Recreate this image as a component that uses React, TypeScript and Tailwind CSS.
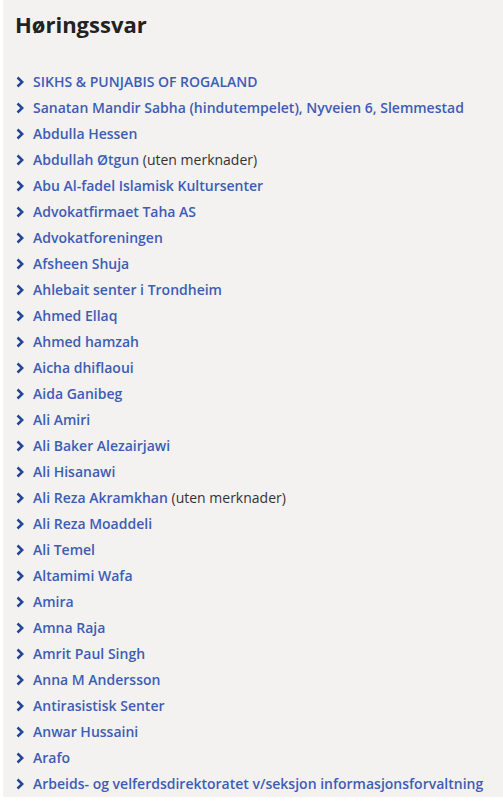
const items: { name: string; note?: string }[] = [
  { name: "SIKHS & PUNJABIS OF ROGALAND" },
  { name: "Sanatan Mandir Sabha (hindutempelet), Nyveien 6, Slemmestad" },
  { name: "Abdulla Hessen" },
  { name: "Abdullah Øtgun", note: "(uten merknader)" },
  { name: "Abu Al-fadel Islamisk Kultursenter" },
  { name: "Advokatfirmaet Taha AS" },
  { name: "Advokatforeningen" },
  { name: "Afsheen Shuja" },
  { name: "Ahlebait senter i Trondheim" },
  { name: "Ahmed Ellaq" },
  { name: "Ahmed hamzah" },
  { name: "Aicha dhiflaoui" },
  { name: "Aida Ganibeg" },
  { name: "Ali Amiri" },
  { name: "Ali Baker Alezairjawi" },
  { name: "Ali Hisanawi" },
  { name: "Ali Reza Akramkhan", note: "(uten merknader)" },
  { name: "Ali Reza Moaddeli" },
  { name: "Ali Temel" },
  { name: "Altamimi Wafa" },
  { name: "Amira" },
  { name: "Amna Raja" },
  { name: "Amrit Paul Singh" },
  { name: "Anna M Andersson" },
  { name: "Antirasistisk Senter" },
  { name: "Anwar Hussaini" },
  { name: "Arafo" },
  { name: "Arbeids- og velferdsdirektoratet v/seksjon informasjonsforvaltning" },
];

function Chevron() {
  return (
    <svg width="8" height="12" viewBox="0 0 8 12" className="shrink-0 text-[#1f4796]">
      <path d="M1.5 1.5 L6.2 6 L1.5 10.5" fill="none" stroke="currentColor" strokeWidth="2.5" />
    </svg>
  );
}

export default function App() {
  return (
    <div className="min-h-screen bg-white pl-[3px] font-['Open_Sans',sans-serif]">
      <section className="bg-[#f4f1f1] pt-[9px] pl-3 pr-3">
        <h2 className="text-[22px] font-bold leading-[30px] text-[#222]">Høringssvar</h2>
        <ul className="mt-[30px] flex flex-col">
          {items.map((it) => (
            <li key={it.name} className="flex h-[26px] items-center gap-[9px] pl-[1px] text-[14px] leading-[26px]">
              <Chevron />
              <span className="whitespace-nowrap">
                <a href="#" className="font-semibold text-[#3d5db5]">
                  {it.name}
                </a>
                {it.note && <span className="text-[#333]"> {it.note}</span>}
              </span>
            </li>
          ))}
        </ul>
      </section>
    </div>
  );
}
